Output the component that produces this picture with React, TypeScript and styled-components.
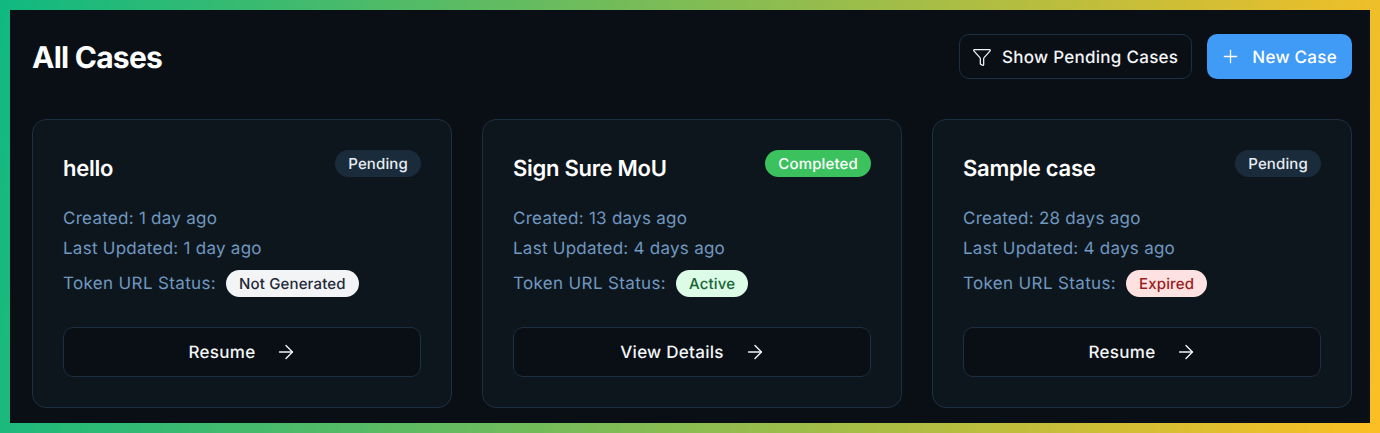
import styled, { createGlobalStyle } from "styled-components";
import { ArrowRight, Funnel, Plus } from "lucide-react";

const GlobalStyle = createGlobalStyle`
  html, body {
    margin: 0;
    padding: 0;
    background: #0a0f15;
  }
  * {
    box-sizing: border-box;
  }
`;

const Frame = styled.div`
  width: 1380px;
  height: 433px;
  padding: 10px;
  background: linear-gradient(100deg, #10b981 0%, #fbbf24 100%);
  font-family: Inter, "Liberation Sans", sans-serif;
  text-rendering: geometricPrecision;
`;

const Panel = styled.main`
  height: 100%;
  padding: 24px 18px 15px 22px;
  background: #0a0f15;
`;

const Header = styled.header`
  display: flex;
  align-items: center;
  justify-content: space-between;
  height: 45px;
  margin-bottom: 40px;
`;

const Title = styled.h1`
  margin: 2px 0 0;
  color: #ffffff;
  font-size: 30px;
  line-height: 36px;
  font-weight: 700;
  letter-spacing: -0.75px;
`;

const Actions = styled.div`
  display: flex;
  gap: 15px;
`;

const ButtonLabel = styled.span`
  padding-top: 2px;
`;

const OutlineButton = styled.button`
  display: flex;
  align-items: center;
  gap: 10px;
  height: 45px;
  padding: 0 13px 0 12px;
  border: 1px solid #1c2f42;
  border-radius: 10px;
  background: #0a0f15;
  color: #f3f5f7;
  font: 500 17px Inter, sans-serif;
  letter-spacing: 0.28px;
  text-rendering: geometricPrecision;
`;

const PrimaryButton = styled(OutlineButton)`
  gap: 11px;
  padding: 0 15px 0 13px;
  border: 0;
  background: #3f9bf6;
  color: #ffffff;
`;

const Grid = styled.section`
  display: grid;
  grid-template-columns: repeat(3, 420px);
  gap: 30px;
`;

const Card = styled.article`
  height: 289px;
  padding: 30px;
  border: 1px solid #1c2f42;
  border-radius: 14px;
  background: #0e161d;
`;

const CardTop = styled.div`
  display: flex;
  align-items: flex-start;
  justify-content: space-between;
  height: 37px;
  margin-bottom: 17px;
`;

const CardTitle = styled.h2`
  margin: 5px 0 0;
  color: #ffffff;
  font-size: 22px;
  line-height: 28px;
  font-weight: 600;
  letter-spacing: -0.28px;
`;

const tones = {
  muted: { bg: "#1a2b3c", fg: "#e8edf2" },
  done: { bg: "#3bc25f", fg: "#ffffff" },
  none: { bg: "#f3f4f6", fg: "#1f2937" },
  active: { bg: "#dcfce7", fg: "#166534" },
  expired: { bg: "#fee2e2", fg: "#991b1b" },
};

type Tone = keyof typeof tones;

const Badge = styled.span<{ $tone: Tone }>`
  display: inline-flex;
  align-items: center;
  height: 27px;
  padding: 0 13px;
  border-radius: 14px;
  background: ${(p) => tones[p.$tone].bg};
  color: ${(p) => tones[p.$tone].fg};
  font-size: 15px;
  font-weight: 500;
  letter-spacing: 0.15px;
  white-space: nowrap;
`;

const Meta = styled.p`
  margin: 0;
  color: #7098c0;
  font-size: 17px;
  line-height: 30px;
  letter-spacing: 0.26px;
`;

const TokenRow = styled.div`
  display: flex;
  align-items: center;
  gap: 10px;
  height: 27px;
  margin-top: 6px;
  margin-bottom: 30px;
  color: #7098c0;
  font-size: 17px;
  letter-spacing: 0.35px;
`;

const CardButton = styled.button`
  display: flex;
  align-items: center;
  justify-content: center;
  gap: 20px;
  width: 100%;
  height: 50px;
  padding: 0 0 0 2px;
  border: 1px solid #1c2f42;
  border-radius: 10px;
  background: #0a0f15;
  color: #f3f5f7;
  font: 500 17px Inter, sans-serif;
  letter-spacing: 0.28px;
  text-rendering: geometricPrecision;
`;

type CaseItem = {
  title: string;
  status: string;
  statusTone: Tone;
  created: string;
  updated: string;
  token: string;
  tokenTone: Tone;
  action: string;
};

const cases: CaseItem[] = [
  {
    title: "hello",
    status: "Pending",
    statusTone: "muted",
    created: "1 day ago",
    updated: "1 day ago",
    token: "Not Generated",
    tokenTone: "none",
    action: "Resume",
  },
  {
    title: "Sign Sure MoU",
    status: "Completed",
    statusTone: "done",
    created: "13 days ago",
    updated: "4 days ago",
    token: "Active",
    tokenTone: "active",
    action: "View Details",
  },
  {
    title: "Sample case",
    status: "Pending",
    statusTone: "muted",
    created: "28 days ago",
    updated: "4 days ago",
    token: "Expired",
    tokenTone: "expired",
    action: "Resume",
  },
];

export default function App() {
  return (
    <Frame>
      <GlobalStyle />
      <Panel>
        <Header>
          <Title>All Cases</Title>
          <Actions>
            <OutlineButton>
              <Funnel size={20} strokeWidth={1.5} />
              <ButtonLabel>Show Pending Cases</ButtonLabel>
            </OutlineButton>
            <PrimaryButton>
              <Plus size={21} strokeWidth={1.5} />
              <ButtonLabel>New Case</ButtonLabel>
            </PrimaryButton>
          </Actions>
        </Header>
        <Grid>
          {cases.map((item) => (
            <Card key={item.title}>
              <CardTop>
                <CardTitle>{item.title}</CardTitle>
                <Badge $tone={item.statusTone}>{item.status}</Badge>
              </CardTop>
              <Meta>Created: {item.created}</Meta>
              <Meta>Last Updated: {item.updated}</Meta>
              <TokenRow>
                Token URL Status:
                <Badge $tone={item.tokenTone}>{item.token}</Badge>
              </TokenRow>
              <CardButton>
                <ButtonLabel>{item.action}</ButtonLabel>
                <ArrowRight size={22} strokeWidth={1.5} />
              </CardButton>
            </Card>
          ))}
        </Grid>
      </Panel>
    </Frame>
  );
}
